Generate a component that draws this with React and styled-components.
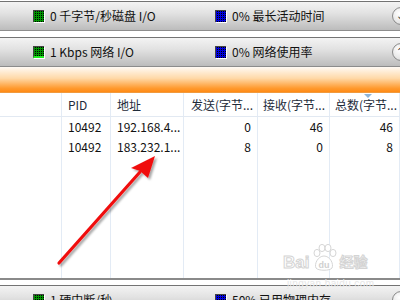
import styled, { createGlobalStyle } from "styled-components";

const GlobalStyle = createGlobalStyle`
  html, body {
    margin: 0;
    padding: 0;
    background: #fff;
  }
  body {
    font-family: "Noto Sans CJK SC", "Noto Sans", sans-serif;
    color: #1a1a1a;
  }
`;

const columns = [
  { key: "name", title: "", width: 62 },
  { key: "pid", title: "PID", width: 49 },
  { key: "addr", title: "地址", width: 73 },
  { key: "sent", title: "发送(字节...", width: 74, right: true },
  { key: "recv", title: "接收(字节...", width: 72, right: true },
  { key: "total", title: "总数(字节...", width: 70, right: true, sorted: true },
];

const rows = [
  { name: "", pid: "10492", addr: "192.168.4...", sent: 0, recv: 46, total: 46 },
  { name: "", pid: "10492", addr: "183.232.1...", sent: 8, recv: 0, total: 8 },
];

const gridCols = columns.map((c) => `${c.width}px`).join(" ");

export default function App() {
  return (
    <Page>
      <GlobalStyle />
      <SectionBar>
        <Metric>
          <Swatch $color="#009400" />
          0 千字节/秒磁盘 I/O
        </Metric>
        <Metric>
          <Swatch $color="#0000e0" />
          0% 最长活动时间
        </Metric>
        <ToggleButton>⌄</ToggleButton>
      </SectionBar>
      <SectionBar $spaced>
        <Metric>
          <Swatch $color="#009400" $trace />
          1 Kbps 网络 I/O
        </Metric>
        <Metric>
          <Swatch $color="#0000e0" />
          0% 网络使用率
        </Metric>
        <ToggleButton>⌃</ToggleButton>
      </SectionBar>
      <OrangeBand />
      <Table>
        <HeaderRow>
          {columns.map((c) => (
            <HeaderCell key={c.key} $right={c.right}>
              {c.sorted && <SortMark />}
              {c.title}
            </HeaderCell>
          ))}
        </HeaderRow>
        {rows.map((r, i) => (
          <Row key={i}>
            {columns.map((c) => (
              <Cell key={c.key} $right={c.right}>
                {r[c.key]}
              </Cell>
            ))}
          </Row>
        ))}
        <FillerRow>
          {columns.map((c) => (
            <Cell key={c.key} />
          ))}
        </FillerRow>
      </Table>
      <SectionBar $bottom>
        <Metric>
          <Swatch $color="#009400" />
          1 硬中断/秒
        </Metric>
        <Metric>
          <Swatch $color="#0000e0" />
          50% 已用物理内存
        </Metric>
        <ToggleButton>⌄</ToggleButton>
      </SectionBar>

      <Watermark>
        <WmWord>Bai</WmWord>
        <Paw width="26" height="28" viewBox="0 0 26 28">
          <g fill="#fff" stroke="#d6d6d6" strokeWidth="1">
            <ellipse cx="6" cy="9" rx="3" ry="3.6" />
            <ellipse cx="11" cy="4" rx="3" ry="3.6" />
            <ellipse cx="17" cy="4" rx="3" ry="3.6" />
            <ellipse cx="22" cy="9" rx="3" ry="3.6" />
            <path d="M13 12 C7 12 3 20 5 24 C7 27 19 27 21 24 C23 20 19 12 13 12 Z" />
          </g>
          <text x="13" y="24" textAnchor="middle" fontSize="9" fill="#d0d0d0" fontFamily="Liberation Sans, sans-serif" fontWeight="700">du</text>
        </Paw>
        <WmWord $cjk>经验</WmWord>
        <WmUrl>jingyan.baidu.com</WmUrl>
      </Watermark>

      <Arrow width="400" height="300" viewBox="0 0 400 300">
        <defs>
          <filter id="shade" x="-20%" y="-20%" width="140%" height="140%">
            <feDropShadow dx="2" dy="2" stdDeviation="1.2" floodColor="#000" floodOpacity="0.35" />
          </filter>
        </defs>
        <g filter="url(#shade)">
          <line x1="59" y1="263" x2="140" y2="172" stroke="#f01010" strokeWidth="3.2" strokeLinecap="round" />
          <path d="M155 156 L148 178 L140 171 L131 168 Z" fill="#f01010" />
        </g>
      </Arrow>
    </Page>
  );
}

const Page = styled.div`
  position: relative;
  width: 400px;
  height: 300px;
  overflow: hidden;
  padding-top: 1px;
  box-sizing: border-box;
  display: flex;
  flex-direction: column;
`;

const SectionBar = styled.div`
  flex-shrink: 0;
  box-sizing: border-box;
  height: 30px;
  margin-top: ${(p) => (p.$spaced ? "6px" : p.$bottom ? "5px" : "0")};
  border-top: 1px solid #737373;
  border-bottom: 1px solid #8c8c8c;
  background: linear-gradient(#f3f3f3 0%, #e2e2e2 40%, #bcbcbc 100%);
  display: grid;
  grid-template-columns: 182px 1fr 16px;
  align-items: center;
  padding-left: 33px;
  margin-right: -8px;
`;

const Metric = styled.div`
  display: flex;
  align-items: center;
  gap: 6px;
  font-size: 12px;
  color: #111;
  white-space: nowrap;
  line-height: 14px;
`;

const Swatch = styled.span`
  width: 10px;
  height: 11px;
  flex-shrink: 0;
  border-left: 1px solid #444;
  border-top: 1px solid #444;
  box-shadow: 1px 1px 0 #fff;
  background-color: ${(p) => p.$color};
  background-image: conic-gradient(#000 0 25%, transparent 0 100%);
  background-size: 2px 2px;
  ${(p) => p.$trace && "border-bottom: 2px solid #22ee22; height: 9px;"}
`;

const ToggleButton = styled.div`
  width: 16px;
  height: 16px;
  border-radius: 50%;
  border: 1px solid #8a8a8a;
  background: radial-gradient(circle at 40% 35%, #ffffff, #d6d6d6);
  font-size: 10px;
  line-height: 16px;
  text-indent: 3px;
  color: #333;
  font-family: "DejaVu Sans", sans-serif;
  overflow: hidden;
`;

const OrangeBand = styled.div`
  flex-shrink: 0;
  height: 26px;
  box-sizing: border-box;
  border-bottom: 1px solid #f09a3e;
  background: linear-gradient(#fffaf4 0%, #ffd9a8 45%, #ff9a2e 85%, #ff8a14 100%);
`;

const Table = styled.div`
  flex-shrink: 0;
  height: 187px;
  box-sizing: border-box;
  border-bottom: 2px solid #8a8a8a;
  display: flex;
  flex-direction: column;
`;

const HeaderRow = styled.div`
  display: grid;
  grid-template-columns: ${gridCols};
  height: 24px;
  box-sizing: border-box;
  border-bottom: 1px solid #e2e9f2;
`;

const Row = styled.div`
  display: grid;
  grid-template-columns: ${gridCols};
  height: 20px;
`;

const FillerRow = styled(Row)`
  flex: 1;
  height: auto;
`;

const Cell = styled.div`
  box-sizing: border-box;
  border-right: 1px solid #e3ebf5;
  font-size: 12px;
  line-height: 20px;
  white-space: nowrap;
  overflow: hidden;
  text-align: ${(p) => (p.$right ? "right" : "left")};
  padding: ${(p) => (p.$right ? "0 6px 0 0" : "0 0 0 6px")};
  color: #111;
`;

const HeaderCell = styled(Cell)`
  position: relative;
  line-height: 23px;
  overflow: visible;
  padding: ${(p) => (p.$right ? "0 4px 0 0" : "0 0 0 6px")};
  color: #1e2b3a;
  &:last-child {
    padding-right: 2px;
  }
`;

const SortMark = styled.span`
  position: absolute;
  top: 1px;
  left: 34px;
  width: 0;
  height: 0;
  border-left: 4px solid transparent;
  border-right: 4px solid transparent;
  border-top: 4px solid #8fb4d6;
`;

const Watermark = styled.div`
  position: absolute;
  left: 283px;
  top: 244px;
  display: flex;
  align-items: flex-end;
  gap: 2px;
  pointer-events: none;
`;

const WmWord = styled.span`
  font-family: ${(p) => (p.$cjk ? '"Noto Sans CJK SC", sans-serif' : '"Liberation Sans", sans-serif')};
  font-size: ${(p) => (p.$cjk ? "14px" : "17px")};
  font-weight: 700;
  color: #fff;
  -webkit-text-stroke: 1px #d4d4d4;
  line-height: 18px;
  margin-bottom: ${(p) => (p.$cjk ? "2px" : "0")};
`;

const Paw = styled.svg`
  display: block;
`;

const WmUrl = styled.span`
  position: absolute;
  left: 4px;
  top: 34px;
  font-family: "Liberation Sans", sans-serif;
  font-size: 10px;
  color: #e6e6e6;
  letter-spacing: 0.4px;
  white-space: nowrap;
`;

const Arrow = styled.svg`
  position: absolute;
  left: 0;
  top: 0;
  pointer-events: none;
`;
